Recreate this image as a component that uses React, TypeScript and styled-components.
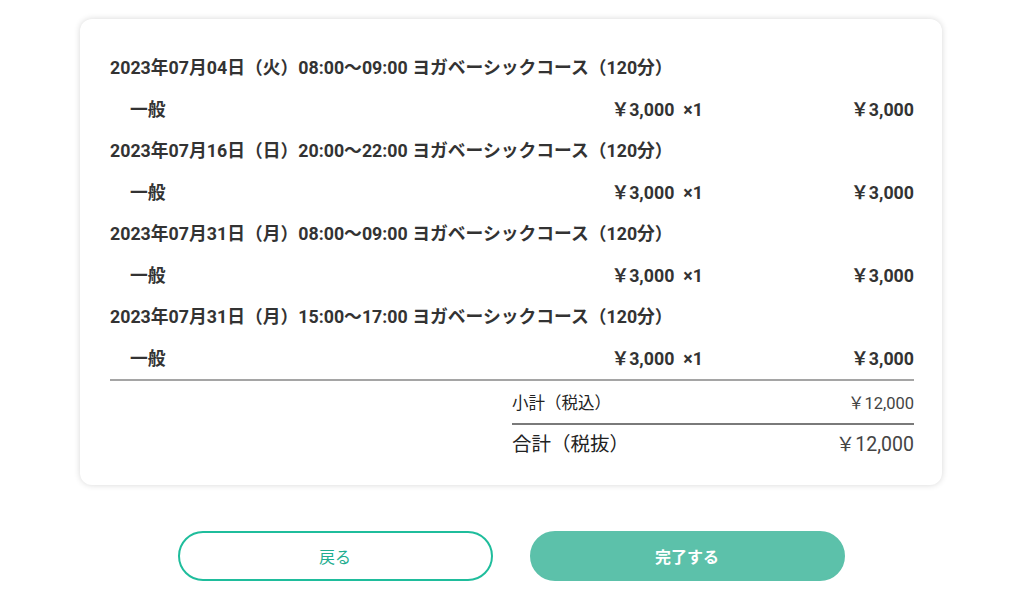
import React from 'react';
import styled, { createGlobalStyle } from 'styled-components';

const GlobalStyle = createGlobalStyle`
  html, body {
    margin: 0;
    padding: 0;
    background: #ffffff;
  }
  body {
    font-family: Roboto, "Noto Sans CJK JP", sans-serif;
    color: #333333;
  }
`;

const Page = styled.div`
  width: 1022px;
  padding-top: 19px;
`;

const Card = styled.section`
  width: 862px;
  margin: 0 auto;
  box-sizing: border-box;
  padding: 28px 28px 26px 30px;
  background: #ffffff;
  border-radius: 12px;
  box-shadow: 0 0 6px rgba(0, 0, 0, 0.16);
`;

const Items = styled.div`
  border-bottom: 2px solid #a5a5a5;
`;

const Heading = styled.div`
  height: 41.5px;
  line-height: 41.5px;
  font-size: 17.8px;
  font-weight: 700;
  white-space: nowrap;
`;

const ItemRow = styled.div`
  display: grid;
  grid-template-columns: 1fr auto auto 211px;
  height: 41.5px;
  line-height: 41.5px;
  font-size: 17.8px;
  font-weight: 700;
`;

const ItemName = styled.span`
  padding-left: 20px;
`;

const UnitPrice = styled.span`
  text-align: right;
`;

const Qty = styled.span`
  margin-left: 9px;
`;

const Amount = styled.span`
  text-align: right;
`;

const Totals = styled.div`
  width: 402px;
  margin-left: auto;
`;

const TotalRow = styled.div<{ $big?: boolean }>`
  display: flex;
  justify-content: space-between;
  font-size: ${p => (p.$big ? '19.5px' : '16.5px')};
  line-height: ${p => (p.$big ? '28px' : '22px')};
  padding: ${p => (p.$big ? '6px 0 0' : '12px 0 8px')};
  border-bottom: ${p => (p.$big ? 'none' : '2px solid #7a7a7a')};
  color: #222222;
`;

const TotalValue = styled.span`
  color: #444444;
`;

const Buttons = styled.div`
  display: flex;
  justify-content: center;
  gap: 37px;
  margin-top: 46px;
`;

const Button = styled.button<{ $primary?: boolean }>`
  width: 315px;
  height: 50px;
  box-sizing: border-box;
  border-radius: 25px;
  font-family: Roboto, "Noto Sans CJK JP", sans-serif;
  font-size: 16px;
  font-weight: ${p => (p.$primary ? 700 : 400)};
  cursor: pointer;
  border: 2px solid ${p => (p.$primary ? '#5cc1aa' : '#1fbd9c')};
  background: ${p => (p.$primary ? '#5cc1aa' : '#ffffff')};
  color: ${p => (p.$primary ? '#ffffff' : '#1fae8f')};
`;

const bookings = [
  '2023年07月04日（火）08:00〜09:00 ヨガベーシックコース（120分）',
  '2023年07月16日（日）20:00〜22:00 ヨガベーシックコース（120分）',
  '2023年07月31日（月）08:00〜09:00 ヨガベーシックコース（120分）',
  '2023年07月31日（月）15:00〜17:00 ヨガベーシックコース（120分）',
];

const App: React.FC = () => {
  return (
    <Page>
      <GlobalStyle />
      <Card>
        <Items>
          {bookings.map(title => (
            <React.Fragment key={title}>
              <Heading>{title}</Heading>
              <ItemRow>
                <ItemName>一般</ItemName>
                <UnitPrice>￥3,000</UnitPrice>
                <Qty>×1</Qty>
                <Amount>￥3,000</Amount>
              </ItemRow>
            </React.Fragment>
          ))}
        </Items>
        <Totals>
          <TotalRow>
            <span>小計（税込）</span>
            <TotalValue>￥12,000</TotalValue>
          </TotalRow>
          <TotalRow $big>
            <span>合計（税抜）</span>
            <TotalValue>￥12,000</TotalValue>
          </TotalRow>
        </Totals>
      </Card>
      <Buttons>
        <Button>戻る</Button>
        <Button $primary>完了する</Button>
      </Buttons>
    </Page>
  );
};

export default App;
